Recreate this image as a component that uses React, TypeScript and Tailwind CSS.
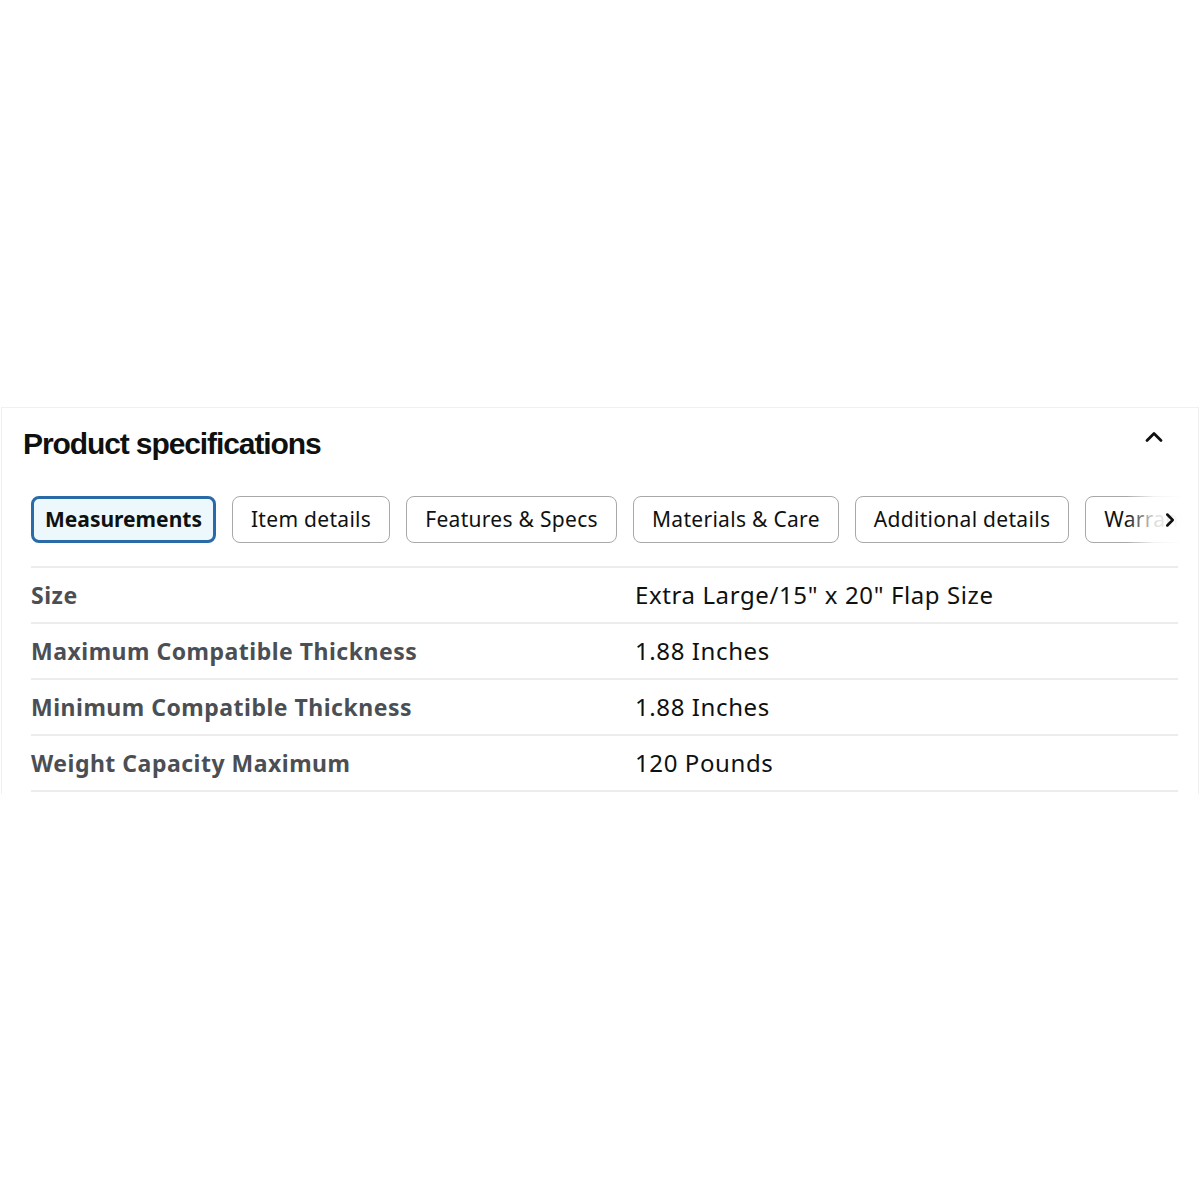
import { ChevronUp, ChevronRight } from "lucide-react";

const tabs = [
  "Measurements",
  "Item details",
  "Features & Specs",
  "Materials & Care",
  "Additional details",
  "Warranty",
];

const rows = [
  { label: "Size", value: 'Extra Large/15" x 20" Flap Size' },
  { label: "Maximum Compatible Thickness", value: "1.88 Inches" },
  { label: "Minimum Compatible Thickness", value: "1.88 Inches" },
  { label: "Weight Capacity Maximum", value: "120 Pounds" },
];

const App = () => {
  return (
    <div className="min-h-[1200px] bg-white pt-[407px] font-['Noto_Sans','Liberation_Sans',sans-serif] text-[#0f1111]">
      <section className="mx-[1px] border-x border-t border-[#f0f0f0] pb-[1px] pl-[21px] pr-[20px] pt-[18px]">
        {/* Header */}
        <div className="flex items-start justify-between">
          <h2 className="font-['Liberation_Sans',sans-serif] text-[30px] font-bold leading-[36px] tracking-[-1.1px] text-[#0f1111]">
            Product specifications
          </h2>
          <ChevronUp className="mr-[10px] -mt-[3px] h-[28px] w-[28px] text-[#0f1111]" strokeWidth={2.4} />
        </div>

        {/* Tabs */}
        <div className="relative mt-[34px] w-[1159px] overflow-hidden">
          <div className="flex gap-[16px] pl-[8px] whitespace-nowrap">
            {tabs.map((t, i) =>
              i === 0 ? (
                <button
                  key={t}
                  className="h-[47px] shrink-0 rounded-[8px] border-[3px] border-[#2a6aa6] bg-[#edf8fc] px-[11px] text-[21px] font-bold text-[#0f1111]"
                >
                  {t}
                </button>
              ) : (
                <button
                  key={t}
                  className="h-[47px] shrink-0 rounded-[8px] border border-[#a8a8a8] bg-white px-[18px] text-[21px] tracking-[0.3px] text-[#0f1111]"
                >
                  {t}
                </button>
              )
            )}
          </div>
          <div className="pointer-events-none absolute right-0 top-0 flex h-[47px] w-[56px] items-center justify-end bg-gradient-to-r from-white/0 via-white/85 to-white">
            <ChevronRight className="mr-[1px] h-[22px] w-[22px] text-[#0f1111]" strokeWidth={2.8} />
          </div>
        </div>

        {/* Spec table */}
        <div className="mb-[1px] ml-[8px] mt-[23px]">
          {rows.map((r) => (
            <div
              key={r.label}
              className="grid h-[56px] grid-cols-[604px_1fr] items-center border-t-2 border-[#ececec]"
            >
              <div className="text-[23px] font-bold tracking-[0.5px] text-[#4b4f54]">{r.label}</div>
              <div className="text-[24px] tracking-[0.6px] text-[#0f1111]">{r.value}</div>
            </div>
          ))}
          <div className="border-t-2 border-[#ececec]" />
        </div>
      </section>
    </div>
  );
};

export default App;
